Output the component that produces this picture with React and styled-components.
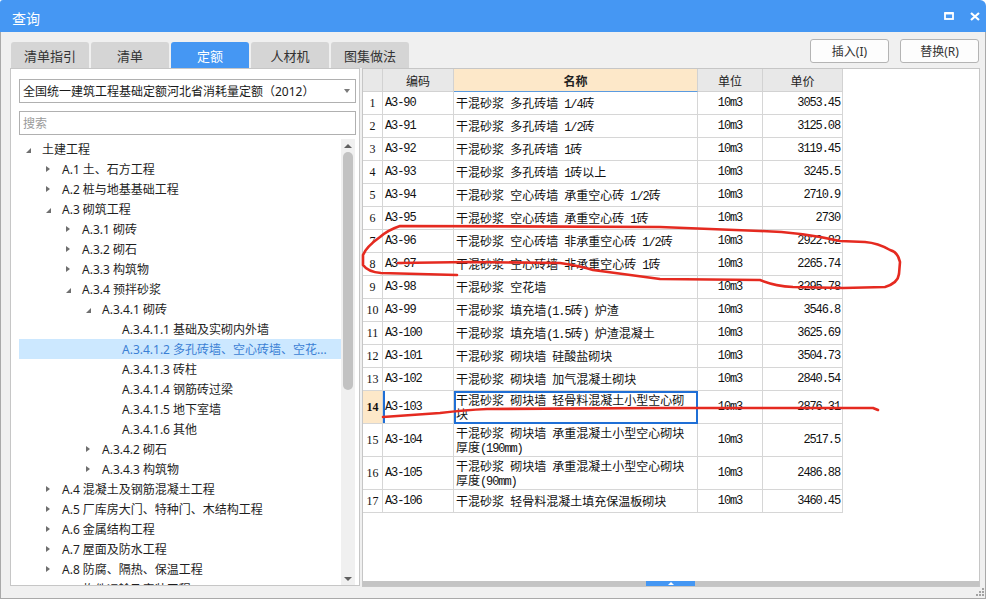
import React from "react";
import styled, { createGlobalStyle } from "styled-components";

const GlobalStyle = createGlobalStyle`
  html, body {
    margin: 0;
    padding: 0;
    background: #ffffff;
  }
  body {
    font-family: "Noto Sans", "Noto Sans CJK SC", sans-serif;
    color: #222;
  }
  * {
    box-sizing: border-box;
  }
`;

const Window = styled.div`
  position: relative;
  width: 986px;
  height: 599px;
  display: flex;
  flex-direction: column;
`;

const TitleBar = styled.div`
  flex: none;
  height: 32px;
  display: flex;
  align-items: center;
  justify-content: space-between;
  padding: 3px 6px 0 12px;
  background: #4597f3;
  border-radius: 3px 6px 0 0;
  color: #ffffff;
  font-family: "Noto Sans CJK SC", sans-serif;
  font-size: 14px;
`;

const TitleControls = styled.div`
  display: flex;
  align-items: center;
  gap: 16px;
  margin-top: -3px;
`;

const Body = styled.div`
  flex: 1;
  display: flex;
  flex-direction: column;
  background: #f0f0f0;
  border: 1px solid #a9a9a9;
  border-top: none;
`;

const Toolbar = styled.div`
  flex: none;
  height: 36px;
  display: flex;
  align-items: flex-end;
  padding: 0 6px 0 10px;
`;

const Tabs = styled.div`
  display: flex;
  gap: 2px;
`;

const Tab = styled.div`
  width: 78px;
  height: 26px;
  display: flex;
  align-items: center;
  justify-content: center;
  border-radius: 3px 3px 0 0;
  background: ${(p) => (p.$active ? "#4597f3" : "#d5d5d5")};
  color: ${(p) => (p.$active ? "#ffffff" : "#333333")};
  font-family: "Noto Sans CJK SC", sans-serif;
  font-size: 13px;
`;

const Actions = styled.div`
  margin-left: auto;
  align-self: flex-start;
  margin-top: 7px;
  display: flex;
  gap: 11px;
`;

const Button = styled.div`
  width: 79px;
  height: 24px;
  display: flex;
  align-items: center;
  justify-content: center;
  background: #fdfdfd;
  border: 1px solid #b4b4b4;
  border-radius: 3px;
  color: #333;
  font-family: "Noto Sans", "Noto Sans CJK SC", sans-serif;
  font-size: 12px;
`;

const Content = styled.div`
  flex: none;
  height: 519px;
  display: flex;
  gap: 2px;
  padding: 0 5px 0 9px;
`;

const LeftPanel = styled.div`
  width: 350px;
  margin-bottom: 1px;
  display: flex;
  flex-direction: column;
  background: #ffffff;
  border: 1px solid #c6c6c6;
  padding: 10px 3px 0 8px;
`;

const Field = styled.div`
  position: relative;
  flex: none;
  height: 24px;
  display: flex;
  align-items: center;
  padding-left: 3px;
  margin-bottom: 8px;
  border: 1px solid #b0b0b0;
  background: #ffffff;
  color: ${(p) => (p.$placeholder ? "#9a9a9a" : "#1a1a1a")};
  font-family: "Noto Sans", "Noto Sans CJK SC", sans-serif;
  font-size: 12px;
  white-space: nowrap;
  overflow: hidden;
`;

const Caret = styled.span`
  position: absolute;
  right: 5px;
  top: 9px;
  width: 0;
  height: 0;
  border-left: 3.5px solid transparent;
  border-right: 3.5px solid transparent;
  border-top: 4px solid #7a7a7a;
`;

const TreeArea = styled.div`
  flex: 1;
  min-height: 0;
  display: flex;
  margin-top: -4px;
  margin-right: 1px;
`;

const TreeList = styled.div`
  flex: 1;
  overflow: hidden;
`;

const TreeRow = styled.div`
  height: 20px;
  display: flex;
  align-items: center;
  padding-left: ${(p) => p.$level * 20 + 7}px;
  background: ${(p) => (p.$selected ? "#cce8ff" : "transparent")};
  color: ${(p) => (p.$selected ? "#3b7fd4" : "#1e1e1e")};
  font-size: 12px;
  white-space: nowrap;
`;

const ArrowBox = styled.span`
  width: 16px;
  flex: none;
  display: flex;
  align-items: center;
`;

const Collapsed = styled.span`
  width: 0;
  height: 0;
  border-top: 3.5px solid transparent;
  border-bottom: 3.5px solid transparent;
  border-left: 4px solid #6f6f6f;
`;

const Expanded = styled.span`
  width: 0;
  height: 0;
  margin-top: 2px;
  border-left: 5px solid transparent;
  border-bottom: 5px solid #6f6f6f;
`;

const VScroll = styled.div`
  width: 14px;
  flex: none;
  display: flex;
  flex-direction: column;
  align-items: center;
  background: #f0f0f0;
`;

const ScrollArrow = styled.div`
  flex: none;
  height: 13px;
  display: flex;
  align-items: center;
  justify-content: center;
  &::before {
    content: "";
    width: 0;
    height: 0;
    border-left: 4px solid transparent;
    border-right: 4px solid transparent;
    ${(p) =>
      p.$down
        ? "border-top: 4px solid #606060;"
        : "border-bottom: 4px solid #606060;"}
  }
`;

const Thumb = styled.div`
  flex: none;
  width: 10px;
  height: 238px;
  border-radius: 5px;
  background: #c2c2c2;
`;

const Spacer = styled.div`
  flex: 1;
`;

const RightPanel = styled.div`
  flex: 1;
  display: flex;
  flex-direction: column;
  background: #ffffff;
  border: 1px solid #c6c6c6;
`;

const TableArea = styled.div`
  flex: 1;
  overflow: hidden;
`;

const GridRow = styled.div`
  display: grid;
  grid-template-columns: 20px 71px 244px 65px 80px;
  width: 480px;
  height: ${(p) => p.$h}px;
`;

const HeadCell = styled.div`
  display: flex;
  align-items: center;
  justify-content: center;
  background: ${(p) => (p.$accent ? "#fde8c9" : "#e8e8e8")};
  border-right: 1px solid #d2d2d2;
  border-bottom: 1px solid ${(p) => (p.$accent ? "#5b9be0" : "#d2d2d2")};
  color: #222;
  font-family: "Noto Sans CJK SC", sans-serif;
  font-size: 12px;
  font-weight: ${(p) => (p.$accent ? 700 : 400)};
`;

const Cell = styled.div`
  display: flex;
  align-items: center;
  overflow: hidden;
  white-space: nowrap;
  border-right: 1px solid #d6d6d6;
  border-bottom: 1px solid #d6d6d6;
  color: #111;
`;

const NumCell = styled(Cell)`
  justify-content: center;
  background: ${(p) => (p.$selected ? "#fde8c9" : "#ffffff")};
  font-family: "Liberation Serif", serif;
  font-size: 12px;
  font-weight: ${(p) => (p.$selected ? 700 : 400)};
`;

const MonoCell = styled(Cell)`
  justify-content: ${(p) =>
    p.$align === "right" ? "flex-end" : p.$align === "center" ? "center" : "flex-start"};
  padding: 0 ${(p) => (p.$align === "right" ? 2 : 0)}px 0
    ${(p) => (p.$align === "left" ? 2 : 0)}px;
  font-family: "Liberation Mono", monospace;
  font-size: 12px;
  letter-spacing: -1.1px;
  box-shadow: ${(p) => (p.$mark ? "inset 2px 0 0 #1f6fd6" : "none")};
`;

const NameCell = styled(Cell)`
  flex-direction: column;
  align-items: flex-start;
  justify-content: ${(p) => (p.$multi ? "flex-start" : "center")};
  padding: ${(p) => (p.$multi ? "2px 0 0 2px" : "0 0 0 2px")};
  font-family: "Noto Sans CJK SC", sans-serif;
  font-size: 12px;
  outline: ${(p) => (p.$selected ? "2px solid #1f6fd6" : "none")};
  outline-offset: -2px;
`;

const NameLine = styled.div`
  flex: none;
  height: 14px;
  line-height: 14px;
  white-space: nowrap;
`;

const Latin = styled.span`
  font-family: "Liberation Mono", monospace;
  font-size: 12px;
  letter-spacing: -1.1px;
  white-space: pre;
`;

const HScroll = styled.div`
  flex: none;
  height: 5px;
  display: flex;
  background: #c4c4c4;
`;

const Handle = styled.div`
  width: 49px;
  margin-left: 283px;
  display: flex;
  align-items: center;
  justify-content: center;
  background: #4597f3;
  &::before {
    content: "";
    width: 0;
    height: 0;
    border-left: 3px solid transparent;
    border-right: 3px solid transparent;
    border-bottom: 3px solid #ffffff;
  }
`;

const BottomStrip = styled.div`
  flex: 1;
  display: flex;
  justify-content: flex-end;
  align-items: flex-start;
`;

const Overlay = styled.svg`
  position: absolute;
  left: 0;
  top: 0;
  pointer-events: none;
`;

const tree = [
  { level: 0, text: "土建工程", state: "open" },
  { level: 1, text: "A.1 土、石方工程", state: "closed" },
  { level: 1, text: "A.2 桩与地基基础工程", state: "closed" },
  { level: 1, text: "A.3 砌筑工程", state: "open" },
  { level: 2, text: "A.3.1 砌砖", state: "closed" },
  { level: 2, text: "A.3.2 砌石", state: "closed" },
  { level: 2, text: "A.3.3 构筑物", state: "closed" },
  { level: 2, text: "A.3.4 预拌砂浆", state: "open" },
  { level: 3, text: "A.3.4.1 砌砖", state: "open" },
  { level: 4, text: "A.3.4.1.1 基础及实砌内外墙" },
  { level: 4, text: "A.3.4.1.2 多孔砖墙、空心砖墙、空花...", selected: true },
  { level: 4, text: "A.3.4.1.3 砖柱" },
  { level: 4, text: "A.3.4.1.4 钢筋砖过梁" },
  { level: 4, text: "A.3.4.1.5 地下室墙" },
  { level: 4, text: "A.3.4.1.6 其他" },
  { level: 3, text: "A.3.4.2 砌石", state: "closed" },
  { level: 3, text: "A.3.4.3 构筑物", state: "closed" },
  { level: 1, text: "A.4 混凝土及钢筋混凝土工程", state: "closed" },
  { level: 1, text: "A.5 厂库房大门、特种门、木结构工程", state: "closed" },
  { level: 1, text: "A.6 金属结构工程", state: "closed" },
  { level: 1, text: "A.7 屋面及防水工程", state: "closed" },
  { level: 1, text: "A.8 防腐、隔热、保温工程", state: "closed" },
  { level: 1, text: "A.9 构件运输及安装工程", state: "closed" },
];

const rows = [
  ["A3-90", ["干混砂浆 多孔砖墙 1/4砖"], "3053.45"],
  ["A3-91", ["干混砂浆 多孔砖墙 1/2砖"], "3125.08"],
  ["A3-92", ["干混砂浆 多孔砖墙 1砖"], "3119.45"],
  ["A3-93", ["干混砂浆 多孔砖墙 1砖以上"], "3245.5"],
  ["A3-94", ["干混砂浆 空心砖墙 承重空心砖 1/2砖"], "2710.9"],
  ["A3-95", ["干混砂浆 空心砖墙 承重空心砖 1砖"], "2730"],
  ["A3-96", ["干混砂浆 空心砖墙 非承重空心砖 1/2砖"], "2922.82"],
  ["A3-97", ["干混砂浆 空心砖墙 非承重空心砖 1砖"], "2265.74"],
  ["A3-98", ["干混砂浆 空花墙"], "3295.78"],
  ["A3-99", ["干混砂浆 填充墙(1.5砖) 炉渣"], "3546.8"],
  ["A3-100", ["干混砂浆 填充墙(1.5砖) 炉渣混凝土"], "3625.69"],
  ["A3-101", ["干混砂浆 砌块墙 硅酸盐砌块"], "3504.73"],
  ["A3-102", ["干混砂浆 砌块墙 加气混凝土砌块"], "2840.54"],
  ["A3-103", ["干混砂浆 砌块墙 轻骨料混凝土小型空心砌", "块"], "2876.31"],
  ["A3-104", ["干混砂浆 砌块墙 承重混凝土小型空心砌块", "厚度(190mm)"], "2517.5"],
  ["A3-105", ["干混砂浆 砌块墙 承重混凝土小型空心砌块", "厚度(90mm)"], "2486.88"],
  ["A3-106", ["干混砂浆 轻骨料混凝土填充保温板砌块"], "3460.45"],
];

const SELECTED_ROW = 14;

// ascii runs get the narrow mono face, like the SimSun half-width glyphs
const mixed = (text) =>
  text
    .split(/([\x20-\x7e]+)/)
    .filter(Boolean)
    .map((part, i) =>
      /^[\x20-\x7e]+$/.test(part) ? (
        <Latin key={i}>{part}</Latin>
      ) : (
        <span key={i}>{part}</span>
      )
    );

function Tree() {
  return (
    <TreeArea>
      <TreeList>
        {tree.map((node, i) => (
          <TreeRow key={i} $level={node.level} $selected={node.selected}>
            <ArrowBox>
              {node.state === "open" && <Expanded />}
              {node.state === "closed" && <Collapsed />}
            </ArrowBox>
            {node.text}
          </TreeRow>
        ))}
      </TreeList>
      <VScroll>
        <ScrollArrow />
        <Thumb />
        <Spacer />
        <ScrollArrow $down />
      </VScroll>
    </TreeArea>
  );
}

function QuotaTable() {
  return (
    <TableArea>
      <GridRow $h={23}>
        <HeadCell />
        <HeadCell>编码</HeadCell>
        <HeadCell $accent>名称</HeadCell>
        <HeadCell>单位</HeadCell>
        <HeadCell>单价</HeadCell>
      </GridRow>
      {rows.map(([code, lines, price], i) => {
        const no = i + 1;
        const multi = lines.length > 1;
        const selected = no === SELECTED_ROW;
        return (
          <GridRow key={code} $h={multi ? 33 : 23}>
            <NumCell $selected={selected}>{no}</NumCell>
            <MonoCell $align="left" $mark={selected}>
              {code}
            </MonoCell>
            <NameCell $multi={multi} $selected={selected}>
              {lines.map((line, j) => (
                <NameLine key={j}>{mixed(line)}</NameLine>
              ))}
            </NameCell>
            <MonoCell $align="center">10m3</MonoCell>
            <MonoCell $align="right">{price}</MonoCell>
          </GridRow>
        );
      })}
    </TableArea>
  );
}

function Annotations() {
  return (
    <Overlay width="990" height="600" viewBox="0 0 990 600">
      <g
        fill="none"
        stroke="#e52a20"
        strokeWidth="2.6"
        strokeLinecap="round"
        strokeLinejoin="round"
      >
        <path d="M398 263 L470 262 L560 263 Q580 266 593 270 L660 279 L760 280 Q775 286 793 287 L843 288 L885 287 Q898 283 899 274 L900 262 Q898 252 890 250 Q878 243 865 242 L840 241 Q800 232 760 231 L660 227 L400 226 Q388 230 380 237 Q366 247 363 255 L363 265 Q368 272 381 273 L457 275" />
        <path d="M383 417 L440 413 Q465 410 487 409 L660 408 L873 408 L878 410" />
      </g>
    </Overlay>
  );
}

function Grip() {
  const dots = [
    [7, 1],
    [4, 4],
    [7, 4],
    [1, 7],
    [4, 7],
    [7, 7],
  ];
  return (
    <svg width="10" height="10" viewBox="0 0 10 10">
      {dots.map(([x, y]) => (
        <rect key={`${x}-${y}`} x={x} y={y} width="2" height="2" fill="#a3a3a3" />
      ))}
    </svg>
  );
}

export default function App() {
  return (
    <>
      <GlobalStyle />
      <Window>
        <TitleBar>
          <span>查询</span>
          <TitleControls>
            <svg width="10" height="8" viewBox="0 0 10 8">
              <rect x="1" y="1.2" width="8" height="5.8" fill="none" stroke="#fff" strokeWidth="1.8" />
              <rect x="0.5" y="0" width="9" height="2.4" fill="#fff" />
            </svg>
            <svg width="10" height="9" viewBox="0 0 10 9">
              <path d="M1 1 L9 8 M9 1 L1 8" stroke="#fff" strokeWidth="2.2" />
            </svg>
          </TitleControls>
        </TitleBar>
        <Body>
          <Toolbar>
            <Tabs>
              <Tab>清单指引</Tab>
              <Tab>清单</Tab>
              <Tab $active>定额</Tab>
              <Tab>人材机</Tab>
              <Tab>图集做法</Tab>
            </Tabs>
            <Actions>
              <Button>插入(I)</Button>
              <Button>替换(R)</Button>
            </Actions>
          </Toolbar>
          <Content>
            <LeftPanel>
              <Field>
                全国统一建筑工程基础定额河北省消耗量定额（2012）
                <Caret />
              </Field>
              <Field $placeholder>搜索</Field>
              <Tree />
            </LeftPanel>
            <RightPanel>
              <QuotaTable />
              <HScroll>
                <Handle />
              </HScroll>
            </RightPanel>
          </Content>
          <BottomStrip>
            <Grip />
          </BottomStrip>
        </Body>
        <Annotations />
      </Window>
    </>
  );
}
